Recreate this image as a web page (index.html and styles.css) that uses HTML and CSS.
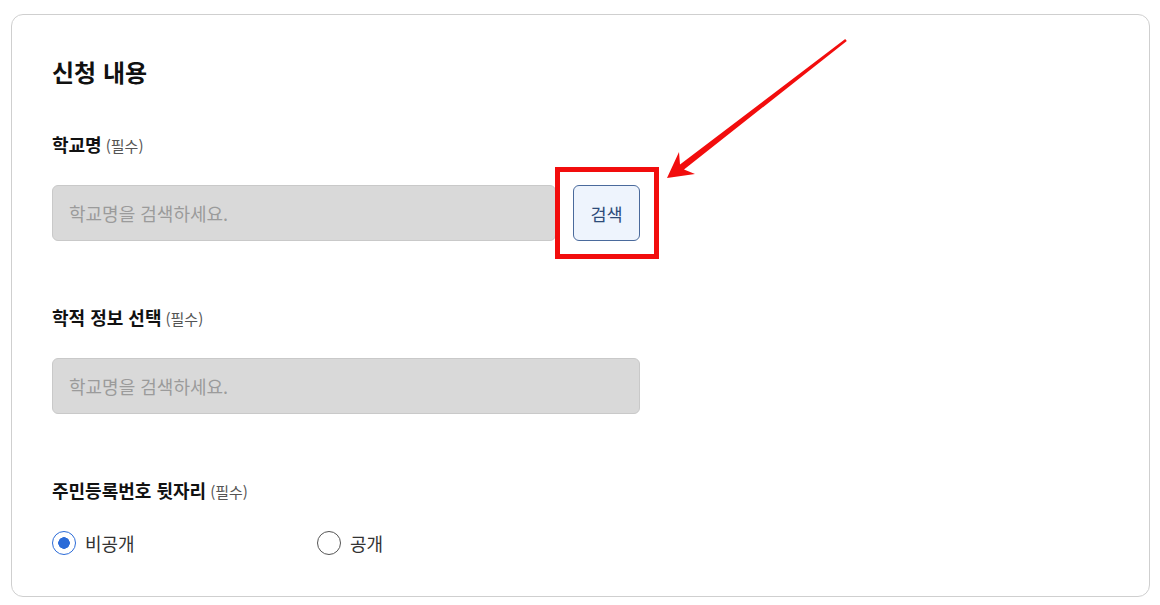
FILE: index.html
```html
<!DOCTYPE html>
<html lang="ko">
<head>
  <meta charset="UTF-8" />
  <title>신청 내용</title>
  <link rel="stylesheet" href="styles.css">
</head>
<body>
<div class="card">
  <h2 class="title">신청 내용</h2>

  <div class="field">
    <div class="label">학교명 <span class="req">(필수)</span></div>
    <div class="search-row">
      <input class="input" placeholder="학교명을 검색하세요." readonly>
      <div class="btn-wrap">
        <button class="btn-search">검색</button>
        <span class="highlight"></span>
      </div>
    </div>
  </div>

  <div class="field">
    <div class="label">학적 정보 선택 <span class="req">(필수)</span></div>
    <div class="search-row">
      <input class="input" placeholder="학교명을 검색하세요." readonly>
    </div>
  </div>

  <div class="field last">
    <div class="label">주민등록번호 뒷자리 <span class="req">(필수)</span></div>
    <div class="radios">
      <label class="radio checked"><span class="dot"></span>비공개</label>
      <label class="radio"><span class="dot"></span>공개</label>
    </div>
  </div>
</div>

<!-- 안내 화살표 -->
<svg class="arrow" width="1160" height="605" viewBox="0 0 1160 605">
  <polygon fill="#f20d0d" points="667,178 695,174 684,169.5 846.8,41 845.2,39 680,164.5 679,152"/>
</svg>
</body>
</html>
```

FILE: styles.css
```css
body {
  margin: 0;
  background: #fff;
  font-family: "Noto Sans CJK KR", "Noto Sans", sans-serif;
  color: #111;
}
.card {
  margin: 14px 10px 8px 11px;
  border: 1px solid #cfcfcf;
  border-radius: 12px;
  padding: 40px 40px 41px 40px;
  height: 583px;
  box-sizing: border-box;
}
.title {
  margin: 0 0 43px 0;
  font-size: 24px;
  line-height: 34px;
  font-weight: 700;
}
.field {
  margin-bottom: 64px;
}
.field.last {
  margin-bottom: 0;
}
.label {
  font-size: 18px;
  line-height: 24px;
  font-weight: 700;
  margin-bottom: 29px;
}
.req {
  font-size: 15px;
  line-height: 1;
  font-weight: 400;
  color: #555;
  margin-left: -1px;
}
.search-row {
  display: flex;
  gap: 17px;
  width: 588px;
}
.input {
  flex: 1;
  height: 56px;
  box-sizing: border-box;
  background: #d9d9d9;
  border: 1px solid #c9c9c9;
  border-radius: 6px;
  padding: 0 16px;
  font-family: inherit;
  font-size: 18px;
  outline: none;
}
.input::placeholder {
  color: #9b9b9b;
}
.btn-wrap {
  position: relative;
}
.btn-search {
  width: 67px;
  height: 56px;
  background: #eef4fd;
  border: 1px solid #4a6a9c;
  border-radius: 6px;
  font-family: inherit;
  font-size: 17.5px;
  color: #2d4b79;
}
.highlight {
  position: absolute;
  left: -18px;
  top: -18px;
  right: -19px;
  bottom: -18px;
  border: 5px solid #f20d0d;
}
.radios {
  display: grid;
  grid-template-columns: 265px auto;
}
.radio {
  display: flex;
  align-items: center;
  gap: 9px;
  height: 24px;
  font-size: 18px;
  color: #333;
}
.dot {
  width: 24px;
  height: 24px;
  box-sizing: border-box;
  border: 1px solid #555;
  border-radius: 50%;
  background: #fff;
}
.radio.checked .dot {
  border: 1.5px solid #2b6bd8;
  background: radial-gradient(circle, #2b6bd8 0 5.5px, #fff 6px);
}
.arrow {
  position: absolute;
  left: 0;
  top: 0;
  pointer-events: none;
}
```
